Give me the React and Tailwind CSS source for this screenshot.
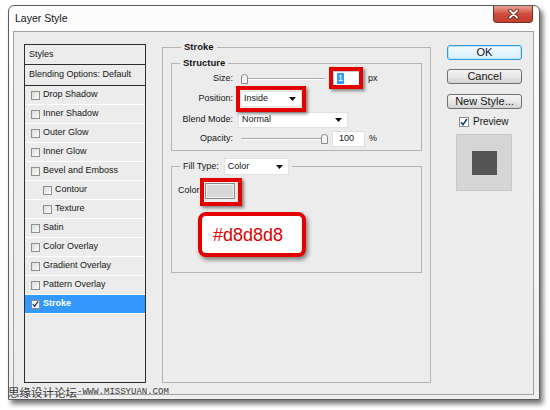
import React from "react";

// Rows of the left "Styles" list, in the order Photoshop shows them.
const STYLE_ROWS = [
  { label: "Drop Shadow" },
  { label: "Inner Shadow" },
  { label: "Outer Glow" },
  { label: "Inner Glow" },
  { label: "Bevel and Emboss" },
  { label: "Contour", sub: true },
  { label: "Texture", sub: true },
  { label: "Satin" },
  { label: "Color Overlay" },
  { label: "Gradient Overlay" },
  { label: "Pattern Overlay" },
  { label: "Stroke", checked: true, active: true },
];

function Check({ checked, size = "w-[9px] h-[9px]" }) {
  return (
    <span
      className={`${size} shrink-0 border border-[#8e8f8f] bg-gradient-to-br from-[#dcdcdc] to-[#fbfbfb] flex items-center justify-center ${
        checked ? "bg-white from-white to-white" : ""
      }`}
    >
      {checked && (
        <svg width="8" height="8" viewBox="0 0 8 8">
          <path d="M1 4.2 L3 6.6 L7 1" fill="none" stroke="#1f3f7a" strokeWidth="1.6" />
        </svg>
      )}
    </span>
  );
}

function Arrow() {
  return (
    <svg width="7" height="4" viewBox="0 0 7 4" className="shrink-0">
      <path d="M0 0 H7 L3.5 4 Z" fill="#111" />
    </svg>
  );
}

function Dropdown({ value, className }) {
  return (
    <div
      className={`${className} flex items-center justify-between bg-white border border-[#e2e2e2] pl-[3px] pr-[5px] text-[9px]`}
    >
      <span>{value}</span>
      <Arrow />
    </div>
  );
}

function Thumb() {
  return (
    <svg width="7" height="10" viewBox="0 0 7 10" className="shrink-0">
      <path
        d="M0.5 3 Q0.5 0.5 3.5 0.5 Q6.5 0.5 6.5 3 V9.5 H0.5 Z"
        fill="#f4f4f4"
        stroke="#8a8a8a"
      />
    </svg>
  );
}

function Slider({ width, thumbRight }) {
  return (
    <div className={`${width} h-[12px] flex items-center relative`}>
      <div className="w-full h-[2px] border-t border-[#a9a9a9] border-b border-b-white" />
      <div className={`absolute top-[1px] ${thumbRight ? "right-0" : "left-0"}`}>
        <Thumb />
      </div>
    </div>
  );
}

// Red annotation frame drawn over a control in the tutorial screenshot
function RedFrame({ className }) {
  return (
    <span
      className={`pointer-events-none absolute ${className} border-[4px] border-[#e50000] shadow-[2px_2px_3px_rgba(0,0,0,0.45)]`}
    />
  );
}

function Button({ children, primary }) {
  return (
    <div
      className={`h-[15px] rounded-[3px] border flex items-center justify-center text-[11px] leading-none ${
        primary
          ? "border-[#3399d8] bg-gradient-to-b from-[#f3fafd] to-[#d8eef9] shadow-[inset_0_0_0_1px_#b8e6f8]"
          : "border-[#707070] bg-gradient-to-b from-[#f4f4f4] via-[#e8e8e8] to-[#d3d3d3]"
      }`}
    >
      {children}
    </div>
  );
}

function StylesList() {
  return (
    <div className="w-[122px] h-[339px] shrink-0 border border-[#2e2e2e] bg-[#ececec] text-[9px]">
      <div className="h-[20px] flex items-center pl-[4px] border-b border-[#2e2e2e]">Styles</div>
      <div className="h-[21px] flex items-center pl-[4px] border-b border-[#2e2e2e]">
        Blending Options: Default
      </div>
      {STYLE_ROWS.map((row) => (
        <div
          key={row.label}
          className={`h-[19px] flex items-center gap-[3px] border-b border-white ${
            row.sub ? "pl-[18px]" : "pl-[6px]"
          } ${row.active ? "bg-[#3399ff] text-white font-bold" : ""}`}
        >
          <Check checked={row.checked} />
          <span>{row.label}</span>
        </div>
      ))}
    </div>
  );
}

function StrokePanel() {
  return (
    <fieldset className="w-[269px] h-[342px] shrink-0 ml-[16px] -mt-[3px] border border-[#b4b4b4] px-[8px]">
      <legend className="ml-[10px] px-[3px] font-bold text-[9.5px] leading-[12px]">Stroke</legend>

      <fieldset className="mt-[4px] border border-[#b4b4b4] pb-[3px] text-[9px]">
        <legend className="ml-[8px] px-[3px] font-bold text-[9.5px] leading-[12px]">Structure</legend>

        <div className="h-[19px] flex items-center">
          <span className="w-[61px] text-right">Size:</span>
          <div className="ml-[8px]">
            <Slider width="w-[84px]" />
          </div>
          <div className="ml-[8px] relative">
            <div className="w-[29px] h-[15px] bg-white border border-[#c9c9c9] flex items-center pl-[3px]">
              <span className="bg-[#3399ff] text-white px-[1px] leading-[11px]">1</span>
            </div>
            <RedFrame className="-left-[4px] -right-[1px] -top-[4px] -bottom-[3px]" />
          </div>
          <span className="ml-[6px]">px</span>
        </div>

        <div className="h-[21px] flex items-center">
          <span className="w-[61px] text-right">Position:</span>
          <div className="ml-[7px] relative">
            <Dropdown value="Inside" className="w-[62px] h-[16px]" />
            <RedFrame className="-left-[4px] -right-[4px] -top-[5px] -bottom-[5px]" />
          </div>
        </div>

        <div className="h-[21px] flex items-center">
          <span className="w-[61px] text-right">Blend Mode:</span>
          <Dropdown value="Normal" className="ml-[5px] w-[110px] h-[16px]" />
        </div>

        <div className="h-[17px] flex items-center">
          <span className="w-[61px] text-right">Opacity:</span>
          <div className="ml-[8px]">
            <Slider width="w-[87px]" thumbRight />
          </div>
          <div className="ml-[4px] w-[33px] h-[16px] bg-white border border-[#e0e0e0] flex items-center pl-[6px]">
            100
          </div>
          <span className="ml-[4px]">%</span>
        </div>
      </fieldset>

      <fieldset className="mt-[7px] h-[115px] border border-[#b4b4b4] text-[9px]">
        <legend className="ml-[8px] px-[3px]">
          <div className="flex items-center gap-[5px]">
            <span>Fill Type:</span>
            <Dropdown value="Color" className="w-[65px] h-[17px]" />
          </div>
        </legend>

        <div className="mt-[7px] pl-[6px] h-[17px] flex items-center">
          <span>Color:</span>
          <div className="ml-[3px] relative">
            <div className="w-[30px] h-[16px] border border-[#8a8a8a] bg-[#d8d8d8] shadow-[inset_0_0_0_1px_#f2f2f2]" />
            <RedFrame className="-left-[5px] -right-[7px] -top-[5px] -bottom-[7px]" />
          </div>
        </div>

        <div className="ml-[26px] mt-[13px] w-[108px] h-[45px] rounded-[8px] border-[4px] border-[#e50000] bg-white shadow-[2px_3px_4px_rgba(0,0,0,0.45)] flex items-center pl-[11px]">
          <span className="text-[18px] text-[#e00000] leading-none">#d8d8d8</span>
        </div>
      </fieldset>
    </fieldset>
  );
}

function SideColumn() {
  return (
    <div className="w-[75px] shrink-0 ml-[16px] mt-[1px] flex flex-col">
      <Button primary>OK</Button>
      <div className="mt-[9px]">
        <Button>Cancel</Button>
      </div>
      <div className="mt-[10px]">
        <Button>New Style...</Button>
      </div>
      <div className="mt-[8px] ml-[12px] flex items-center gap-[4px] text-[10px] leading-none">
        <Check checked size="w-[10px] h-[10px]" />
        <span>Preview</span>
      </div>
      <div className="mt-[7px] ml-[9px] w-[56px] h-[57px] bg-[#d5d5d5] border border-[#c8c8c8] flex items-center justify-center">
        <div className="w-[25px] h-[24px] bg-[#555555]" />
      </div>
    </div>
  );
}

export default function App() {
  return (
    <div className="w-[550px] h-[410px] bg-white pt-[5px] pl-[8px] relative overflow-hidden font-['Liberation_Sans',Arial,sans-serif] text-[#151515]">
      <div className="w-[532px] h-[395px] rounded-t-[6px] border border-[#5c5c5c] bg-gradient-to-b from-[#fdfdfd] to-[#efefef] shadow-[3px_4px_5px_rgba(0,0,0,0.55)] flex flex-col">
        <div className="h-[25px] shrink-0 flex items-start justify-between">
          <span className="ml-[6px] mt-[7px] text-[10.5px] leading-none">Layer Style</span>
          <div className="mr-[6px] w-[40px] h-[17px] rounded-b-[4px] border border-t-0 border-[#7d2b22] bg-gradient-to-b from-[#e8a294] via-[#cf4a3b] to-[#c0402f] flex items-center justify-center">
            <svg width="11" height="10" viewBox="0 0 11 10">
              <path d="M2 1.5 L9 8.5 M9 1.5 L2 8.5" stroke="#5a1d15" strokeWidth="3.4" strokeLinecap="round" />
              <path d="M2 1.5 L9 8.5 M9 1.5 L2 8.5" stroke="#ffffff" strokeWidth="1.8" strokeLinecap="round" />
            </svg>
          </div>
        </div>

        <div className="flex-1 ml-[4px] mr-[5px] mb-[4px] border border-[#a2a2a2] bg-[#ececec] flex items-start pt-[12px] pl-[10px]">
          <StylesList />
          <StrokePanel />
          <SideColumn />
        </div>
      </div>

      <div className="absolute left-[8px] top-[387px] flex items-center text-[#3a3a3a]">
        <span className="text-[11.5px] leading-none font-['Noto_Sans_CJK_SC',sans-serif]">思缘设计论坛</span>
        <span className="text-[9px] leading-none font-['Liberation_Mono',monospace]">-WWW.MISSYUAN.COM</span>
      </div>
    </div>
  );
}
